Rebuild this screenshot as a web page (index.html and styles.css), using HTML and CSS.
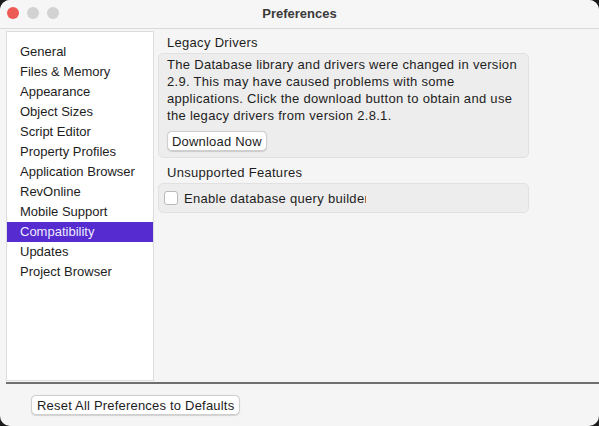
FILE: index.html
```html
<!DOCTYPE html>
<html lang="en">
<head>
<meta charset="utf-8">
<title>Preferences</title>
<link rel="stylesheet" href="styles.css">
</head>
<body>
<div class="window">
  <header class="titlebar">
    <div class="lights">
      <span class="light close"></span>
      <span class="light"></span>
      <span class="light"></span>
    </div>
    <div class="title">Preferences</div>
    <div></div>
  </header>

  <div class="main">
    <nav class="sidebar">
      <div class="item">General</div>
      <div class="item">Files &amp; Memory</div>
      <div class="item">Appearance</div>
      <div class="item">Object Sizes</div>
      <div class="item">Script Editor</div>
      <div class="item">Property Profiles</div>
      <div class="item">Application Browser</div>
      <div class="item">RevOnline</div>
      <div class="item">Mobile Support</div>
      <div class="item selected">Compatibility</div>
      <div class="item">Updates</div>
      <div class="item">Project Browser</div>
    </nav>

    <section class="pane">
      <div class="group-label">Legacy Drivers</div>
      <div class="group">
        <p class="note">The Database library and drivers were changed in version 2.9. This may have caused problems with some applications. Click the download button to obtain and use the legacy drivers from version 2.8.1.</p>
        <button class="btn">Download Now</button>
      </div>

      <div class="group-label">Unsupported Features</div>
      <div class="group group-row">
        <label class="check">
          <span class="box"></span>
          <span class="check-text">Enable database query builder</span>
        </label>
      </div>
    </section>
  </div>

  <div class="divider"></div>

  <footer class="footer">
    <button class="btn">Reset All Preferences to Defaults</button>
  </footer>
</div>
</body>
</html>
```

FILE: styles.css
```css
* {
  box-sizing: border-box;
}

html, body {
  margin: 0;
  height: 100%;
}

body {
  background: #1c1c1c;
  font-family: "Liberation Sans", Arial, sans-serif;
  font-size: 13px;
  color: #1d1d1d;
}

.window {
  width: 599px;
  height: 426px;
  background: #f5f5f5;
  border-radius: 10px;
  overflow: hidden;
  display: flex;
  flex-direction: column;
}

/* title bar */
.titlebar {
  height: 29px;
  flex: none;
  display: grid;
  grid-template-columns: 1fr auto 1fr;
  align-items: center;
  border-bottom: 1px solid #dadada;
  background: #f6f6f6;
  padding-bottom: 2px;
}

.lights {
  display: flex;
  gap: 8px;
  padding-left: 7px;
}

.light {
  width: 12px;
  height: 12px;
  border-radius: 50%;
  background: #d2d2d2;
}

.light.close {
  background: #ed5b55;
}

.title {
  font-weight: bold;
  font-size: 13px;
  color: #3a3a3a;
}

/* sidebar + pane */
.main {
  display: flex;
  gap: 4px;
  padding: 2px 0 0 6px;
  height: 352px;
  flex: none;
}

.sidebar {
  width: 148px;
  height: 350px;
  background: #fff;
  border: 1px solid #dcdcdc;
  padding-top: 10px;
}

.item {
  height: 20px;
  line-height: 20px;
  padding-left: 13px;
  white-space: nowrap;
}

.item.selected {
  background: #562bcf;
  color: #eeeaff;
}

.pane {
  width: 371px;
  display: flex;
  flex-direction: column;
  letter-spacing: 0.3px;
}

.group-label {
  height: 20px;
  line-height: 20px;
  padding-left: 9px;
  margin-top: 2px;
}

.group {
  background: #ededed;
  border: 1px solid #e1e1e1;
  border-radius: 5px;
  padding: 2px 8px 6px 8px;
  margin-bottom: 3px;
}

.note {
  margin: 0;
  line-height: 17px;
  width: 360px;
}

.btn {
  font-family: inherit;
  font-size: 13px;
  letter-spacing: 0.2px;
  color: #1d1d1d;
  height: 20px;
  padding: 0 4px;
  margin-top: 7px;
  background: #fff;
  border: 1px solid #cfcfcf;
  border-radius: 5px;
  box-shadow: 0 0.5px 1px rgba(0, 0, 0, 0.15);
}

.group-row {
  height: 30px;
  padding: 0 5px;
  display: flex;
  align-items: center;
}

.check {
  display: flex;
  align-items: center;
  gap: 6px;
}

.box {
  width: 14px;
  height: 14px;
  border: 1px solid #b9b9b9;
  border-radius: 3px;
  background: #fff;
}

.check-text {
  width: 182px;
  overflow: hidden;
  white-space: nowrap;
}

/* bottom bar */
.divider {
  height: 2px;
  background: #6f6f6f;
  margin: 1px 0 0 6px;
}

.footer {
  padding: 11px 0 0 31px;
}

.footer .btn {
  margin-top: 0;
  padding: 0 5px;
}
```
